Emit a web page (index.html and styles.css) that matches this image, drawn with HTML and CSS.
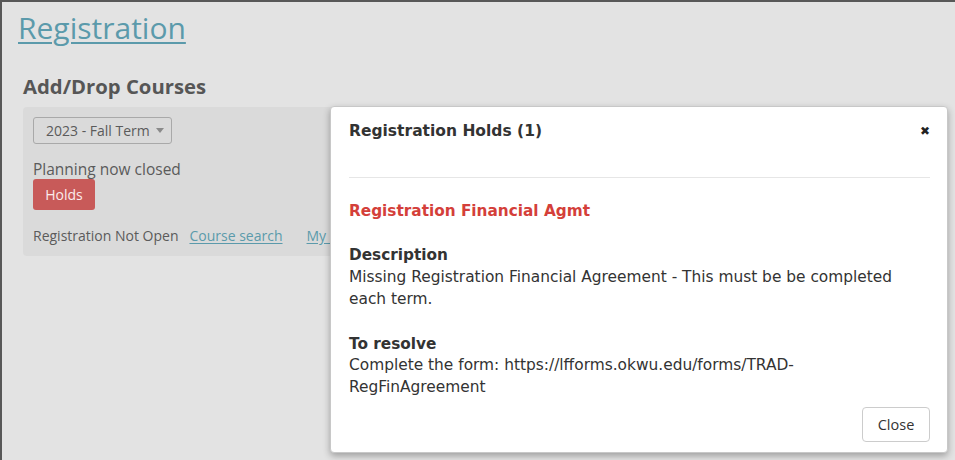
FILE: index.html
```html
<!DOCTYPE html>
<html lang="en">
<head>
<meta charset="utf-8">
<title>Registration</title>
<link rel="stylesheet" href="styles.css">
</head>
<body>
<div class="page">
  <h1 class="page-title"><a href="#">Registration</a></h1>
  <h2 class="section-title">Add/Drop Courses</h2>
  <div class="panel">
    <div class="term-select">2023 - Fall Term <span class="caret"></span></div>
    <div class="status">Planning now closed</div>
    <button class="btn-holds">Holds</button>
    <div class="links">
      <span>Registration Not Open</span>
      <a href="#">Course search</a>
      <a href="#">My schedule</a>
    </div>
  </div>
</div>

<div class="modal">
  <div class="modal-header">
    <span class="modal-title">Registration Holds (1)</span>
    <span class="modal-x">&#x2716;</span>
  </div>
  <div class="modal-body">
    <div class="hold-name">Registration Financial Agmt</div>
    <div class="field">
      <div class="field-label">Description</div>
      <div class="field-text">Missing Registration Financial Agreement - This must be be completed each term.</div>
    </div>
    <div class="field">
      <div class="field-label">To resolve</div>
      <div class="field-text">Complete the form: https://lfforms.okwu.edu/forms/TRAD-RegFinAgreement</div>
    </div>
  </div>
  <div class="modal-footer">
    <button class="btn-close">Close</button>
  </div>
</div>
</body>
</html>
```

FILE: styles.css
```css
html, body {
  margin: 0;
  padding: 0;
}
body {
  width: 955px;
  height: 460px;
  box-sizing: border-box;
  border-top: 2px solid #585858;
  border-left: 2px solid #585858;
  background: #e3e3e3;
  font-family: "Open Sans", sans-serif;
  color: #5b5b5b;
  overflow: hidden;
  position: relative;
}
.page {
  padding: 0 20px 0 16px;
}
.page-title {
  margin: 0;
  padding-top: 8px;
  font-size: 30px;
  font-weight: 400;
  line-height: 36px;
}
.page-title a {
  color: #5b9aab;
  text-decoration: underline;
  text-underline-offset: 3px;
  text-decoration-thickness: 2px;
}
.section-title {
  margin: 27px 0 0 5px;
  font-size: 20.3px;
  font-weight: 700;
  line-height: 26px;
  color: #565656;
}
.panel {
  margin: 8px 0 0 5px;
  background: #dadada;
  border-radius: 4px;
  padding: 10px 10px 0 10px;
  height: 149px;
  box-sizing: border-box;
}
.term-select {
  display: flex;
  width: fit-content;
  align-items: center;
  gap: 6px;
  height: 27px;
  box-sizing: border-box;
  padding: 0 7px 0 12px;
  border: 1px solid #a9a9a9;
  border-radius: 3px;
  font-size: 14px;
  color: #5b5b5b;
}
.caret {
  width: 0;
  height: 0;
  border-left: 4px solid transparent;
  border-right: 4px solid transparent;
  border-top: 5px solid #8a8a8a;
}
.status {
  margin-top: 15px;
  font-size: 15.5px;
  line-height: 20px;
}
.btn-holds {
  margin-top: 0;
  display: block;
  background: #c85a59;
  color: #fbecec;
  border: none;
  border-radius: 3px;
  font-family: "Open Sans", sans-serif;
  font-size: 14px;
  width: 62px;
  height: 31px;
  padding: 0;
}
.links {
  margin-top: 16px;
  display: flex;
  gap: 11px;
  font-size: 14px;
  line-height: 20px;
}
.links a {
  color: #5b9aab;
  text-decoration: underline;
  text-underline-offset: 2px;
}
.links a + a {
  margin-left: 13px;
}

.modal {
  position: absolute;
  left: 328px;
  top: 104px;
  width: 618px;
  height: 347px;
  box-sizing: border-box;
  background: #fff;
  border: 1px solid #c8c8c8;
  border-radius: 4px;
  box-shadow: 0 3px 7px rgba(0,0,0,0.3);
  font-family: "DejaVu Sans", sans-serif;
  color: #333;
}
.modal-header {
  margin: 0 17px 0 18px;
  padding-top: 14px;
  height: 71px;
  box-sizing: border-box;
  border-bottom: 1px solid #e6e6e6;
  display: flex;
  justify-content: space-between;
  align-items: flex-start;
}
.modal-title {
  font-size: 15.5px;
  font-weight: 700;
  line-height: 20px;
}
.modal-x {
  font-size: 12px;
  line-height: 20px;
  color: #222;
}
.modal-body {
  padding: 23px 18px 0 18px;
}
.hold-name {
  color: #d43f3a;
  font-size: 15.3px;
  font-weight: 700;
  line-height: 20px;
}
.field {
  margin-top: 24px;
}
.field-label {
  font-size: 15.3px;
  font-weight: 700;
  line-height: 20px;
}
.field-text {
  margin-top: 2px;
  font-size: 15.4px;
  line-height: 21.5px;
  width: 565px;
}
.field + .field .field-text {
  margin-top: 1px;
}
.modal-footer {
  display: flex;
  justify-content: flex-end;
  padding: 9px 17px 0 0;
}
.btn-close {
  width: 68px;
  height: 35px;
  background: #fff;
  border: 1px solid #ccc;
  border-radius: 4px;
  font-family: "Open Sans", sans-serif;
  font-size: 14.5px;
  color: #333;
}
```
